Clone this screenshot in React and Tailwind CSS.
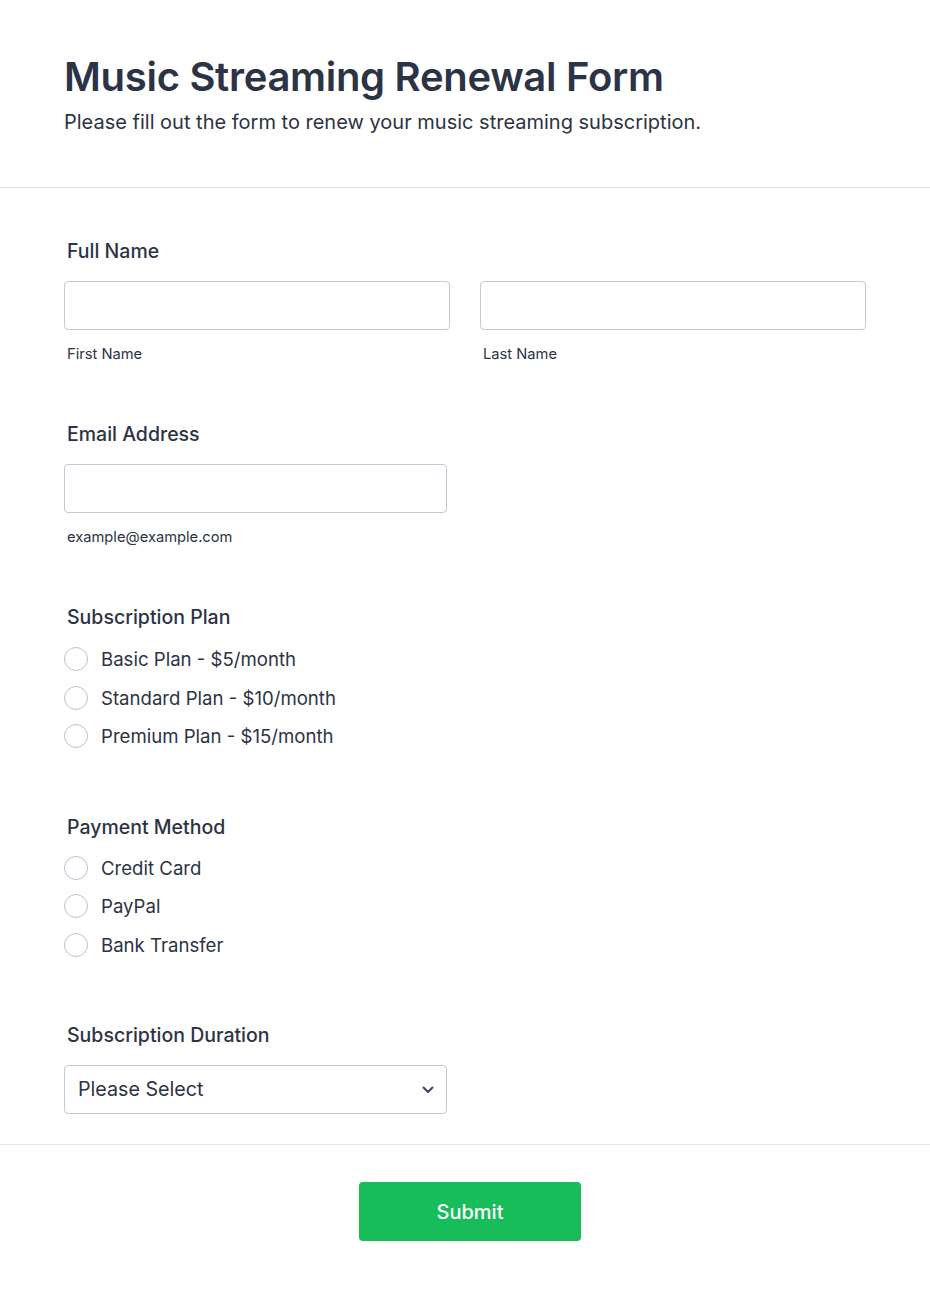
import React from "react";

const font = { fontFamily: "Inter, 'Noto Sans', sans-serif" };

function Radio({ label }) {
  return (
    <label className="flex items-center h-[38.5px]">
      <span className="w-[24px] h-[24px] rounded-full border-[1.5px] border-[#bcc1d2] bg-white shrink-0" />
      <span className="ml-[13px] text-[18.6px] leading-[24px] text-[#2c3345]">{label}</span>
    </label>
  );
}

function Label({ children }) {
  return <div className="pl-[3px] text-[19.5px] font-medium text-[#2c3345] leading-[24px]">{children}</div>;
}

function Sub({ children }) {
  return <div className="pl-[3px] text-[14.7px] leading-[20px] text-[#2c3345]">{children}</div>;
}

export default function App() {
  return (
    <div className="w-[930px] min-h-[1291px] bg-white text-[#2c3345]" style={font}>
      <div className="px-16 pt-[52px] h-[188px] border-b border-[#dcdfee]">
        <h1 className="text-[40px] font-semibold leading-[50px] text-[#2c3345] tracking-[-0.3px]">Music Streaming Renewal Form</h1>
        <p className="mt-[6px] text-[20px] leading-[28px] text-[#2c3345]">Please fill out the form to renew your music streaming subscription.</p>
      </div>

      <div className="px-16 pt-[51px]">
        <Label>Full Name</Label>
        <div className="mt-[18px] flex gap-[30px]">
          <div className="w-[386px]">
            <div className="h-[49px] rounded-[4px] border border-[#c3c7d6]" />
            <div className="mt-[14px]"><Sub>First Name</Sub></div>
          </div>
          <div className="w-[386px]">
            <div className="h-[49px] rounded-[4px] border border-[#c3c7d6]" />
            <div className="mt-[14px]"><Sub>Last Name</Sub></div>
          </div>
        </div>

        <div className="mt-[58px]">
          <Label>Email Address</Label>
          <div className="mt-[18px] w-[383px] h-[49px] rounded-[4px] border border-[#c3c7d6]" />
          <div className="mt-[14px]"><Sub>example@example.com</Sub></div>
        </div>

        <div className="mt-[58px]">
          <Label>Subscription Plan</Label>
          <div className="mt-[11px]">
            <Radio label="Basic Plan - $5/month" />
            <Radio label="Standard Plan - $10/month" />
            <Radio label="Premium Plan - $15/month" />
          </div>
        </div>

        <div className="mt-[59px]">
          <Label>Payment Method</Label>
          <div className="mt-[10px]">
            <Radio label="Credit Card" />
            <Radio label="PayPal" />
            <Radio label="Bank Transfer" />
          </div>
        </div>

        <div className="mt-[59px]">
          <Label>Subscription Duration</Label>
          <div className="mt-[18px] w-[383px] h-[49px] rounded-[4px] border border-[#c3c7d6] flex items-center justify-between pl-[13px] pr-[12px]">
            <span className="text-[19.7px] text-[#2c3345]">Please Select</span>
            <svg width="12" height="8" viewBox="0 0 12 8" fill="none">
              <path d="M1.5 1.5 L6 6 L10.5 1.5" stroke="#3b4560" strokeWidth="2" strokeLinecap="round" strokeLinejoin="round" />
            </svg>
          </div>
        </div>
      </div>

      <div className="mt-[30px] border-t border-[#e3e5ef] flex justify-center pt-[37px]">
        <button className="ml-[10px] w-[222px] h-[59px] rounded-[4px] bg-[#18bd5b] text-white text-[20px] font-medium">Submit</button>
      </div>
    </div>
  );
}
